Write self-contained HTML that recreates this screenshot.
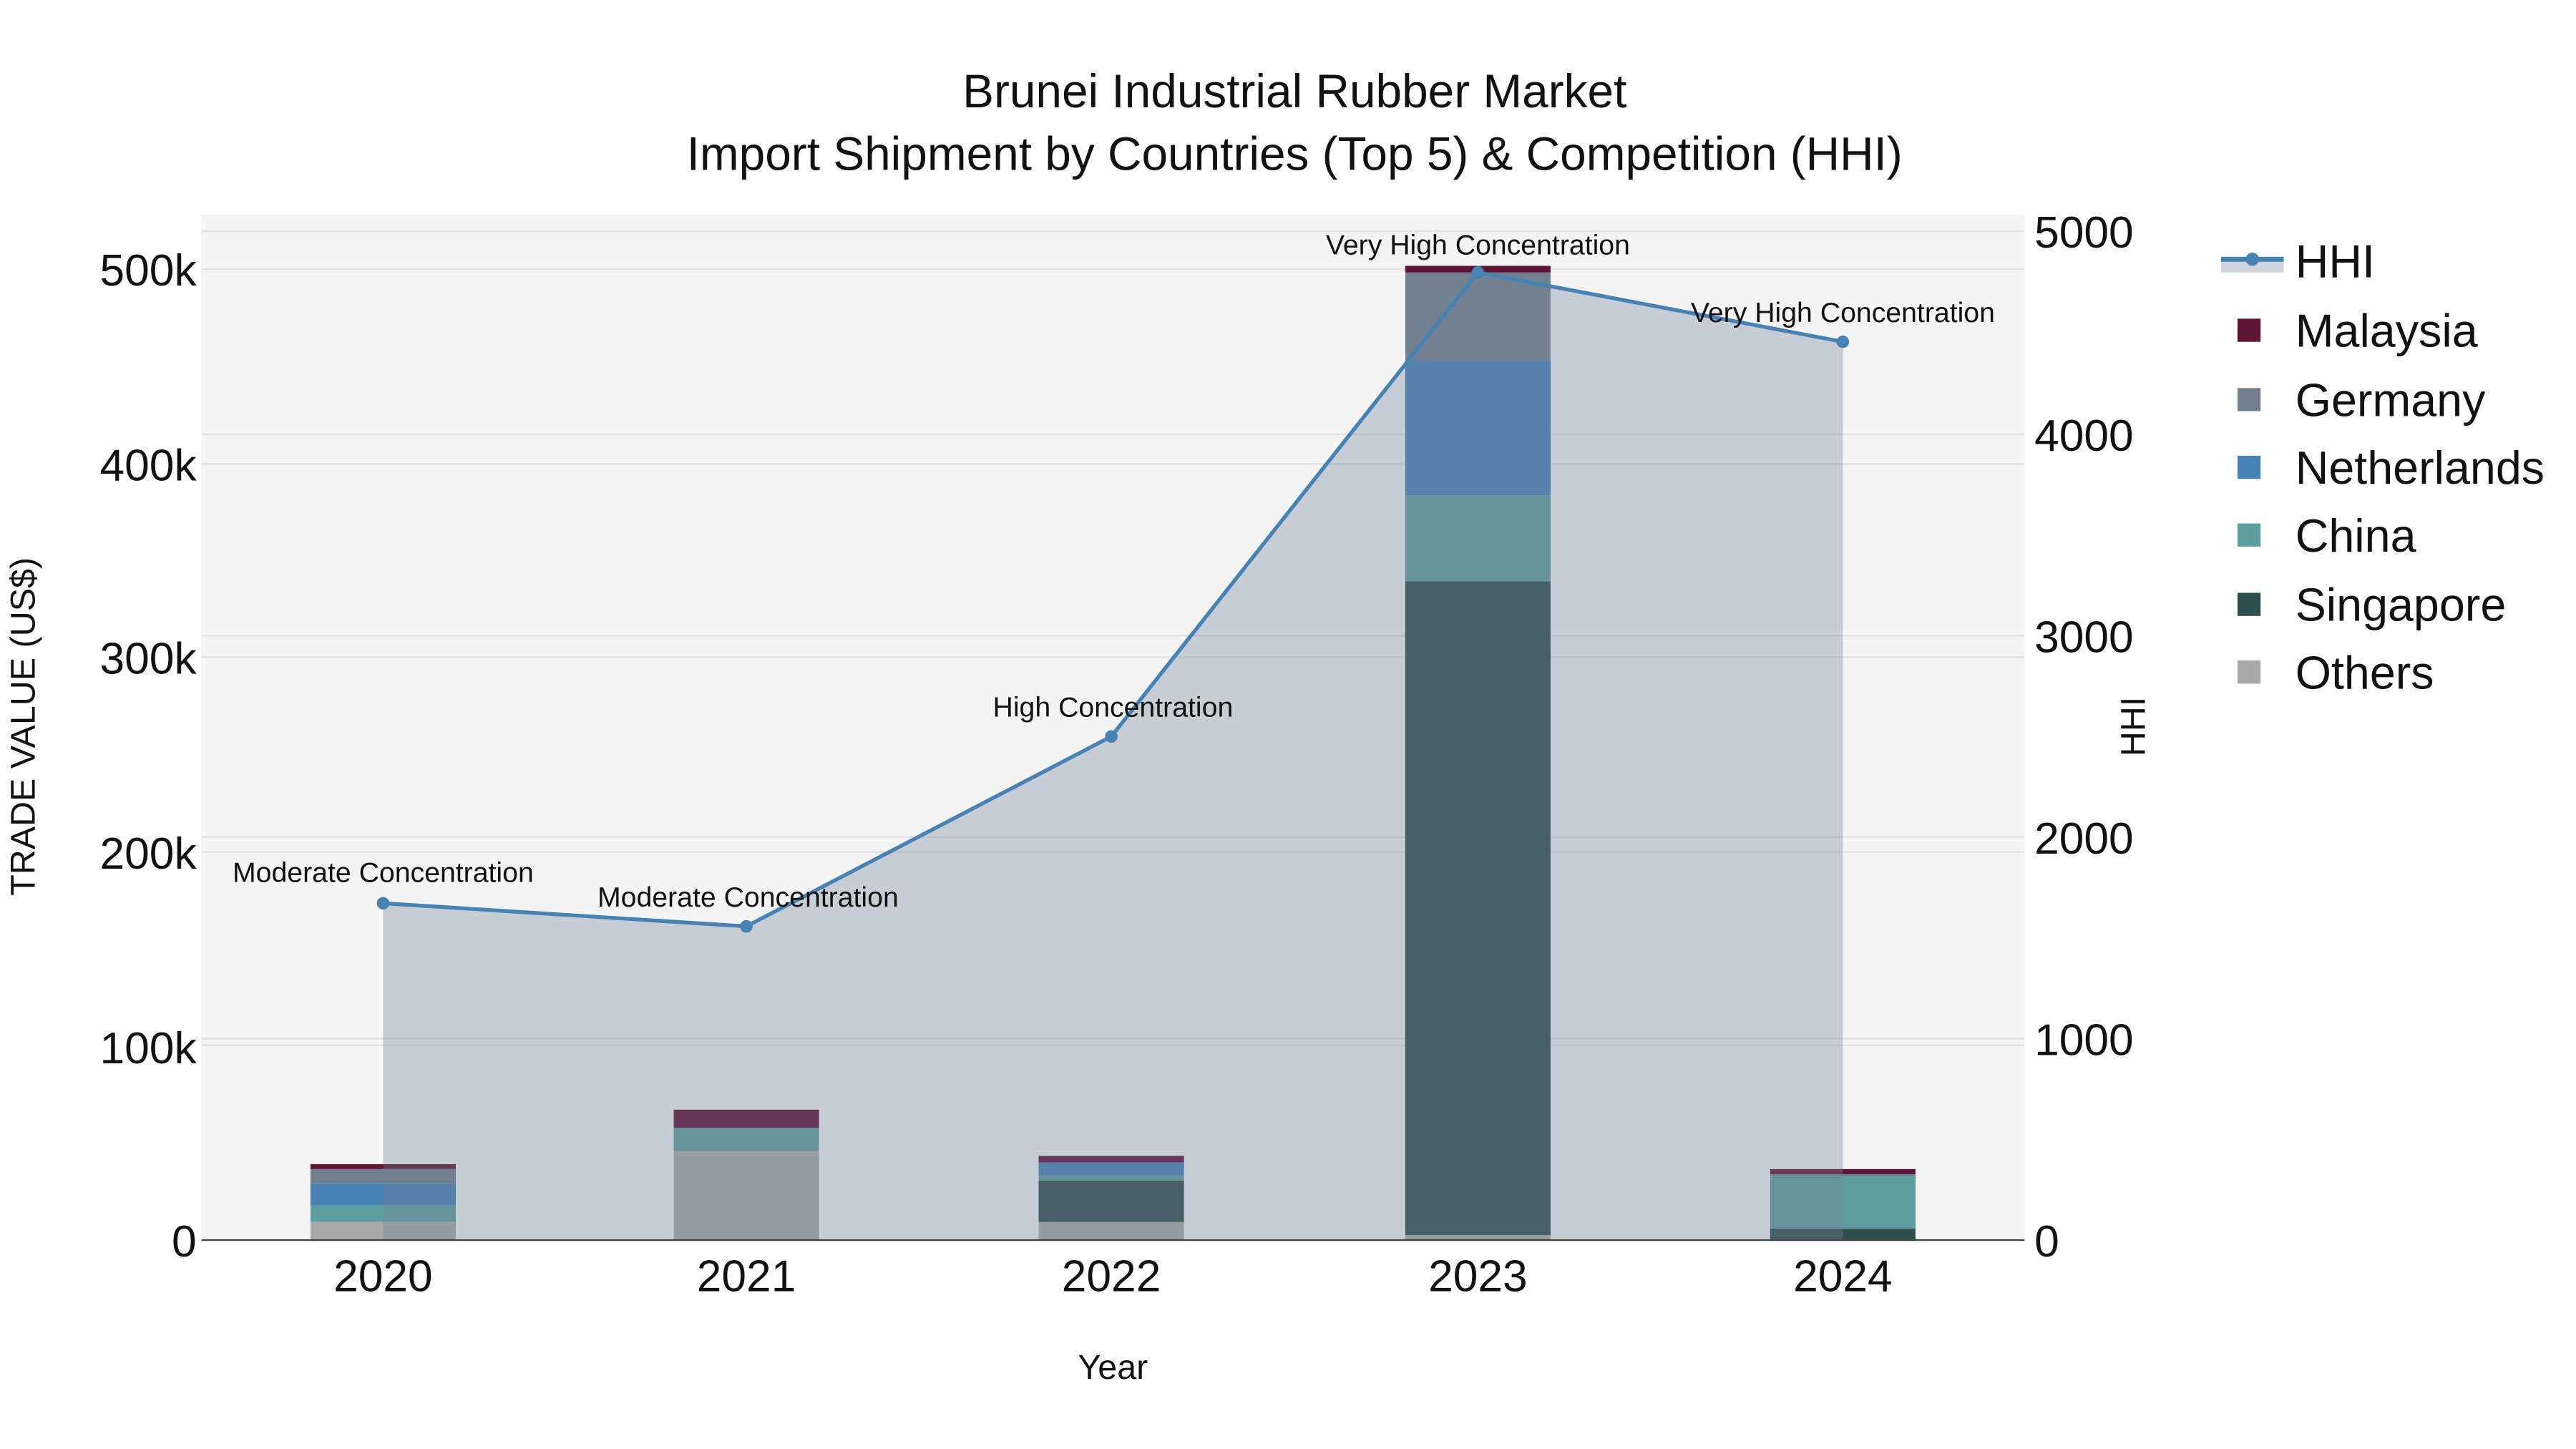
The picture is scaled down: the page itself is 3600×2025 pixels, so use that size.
<!DOCTYPE html>
<html><head><meta charset="utf-8"><style>html,body{margin:0;padding:0;background:#fff}svg{display:block}text{font-family:"Liberation Sans",sans-serif;fill:#111}</style></head><body>
<svg width="3600" height="2025" viewBox="0 0 1560 877.5" xmlns="http://www.w3.org/2000/svg">
<rect width="1560" height="877.5" fill="#fff"/>
<rect x="122" y="130" width="1104" height="621" fill="#f4f4f4"/>
<g stroke="#e2e2e2" stroke-width="1">
<line x1="122" x2="1226" y1="163" y2="163"/><line x1="122" x2="1226" y1="281" y2="281"/><line x1="122" x2="1226" y1="398" y2="398"/><line x1="122" x2="1226" y1="516" y2="516"/><line x1="122" x2="1226" y1="633" y2="633"/>
<line x1="122" x2="1226" y1="140" y2="140"/><line x1="122" x2="1226" y1="263" y2="263"/><line x1="122" x2="1226" y1="385" y2="385"/><line x1="122" x2="1226" y1="507" y2="507"/><line x1="122" x2="1226" y1="629" y2="629"/>
</g>
<g>
<rect x="188" y="740" width="88" height="11" fill="#a9a9a9"/><rect x="188" y="730" width="88" height="10" fill="#5f9ea0"/><rect x="188" y="717" width="88" height="13" fill="#4682b4"/><rect x="188" y="708" width="88" height="9" fill="#708090"/><rect x="188" y="705" width="88" height="3" fill="#5e1434"/>
<rect x="408" y="697" width="88" height="54" fill="#a9a9a9"/><rect x="408" y="683" width="88" height="14" fill="#5f9ea0"/><rect x="408" y="672" width="88" height="11" fill="#5e1434"/>
<rect x="629" y="740" width="88" height="11" fill="#a9a9a9"/><rect x="629" y="715" width="88" height="25" fill="#2f4f4f"/><rect x="629" y="712" width="88" height="3" fill="#5f9ea0"/><rect x="629" y="704" width="88" height="8" fill="#4682b4"/><rect x="629" y="700" width="88" height="4" fill="#5e1434"/>
<rect x="851" y="748" width="88" height="3" fill="#a9a9a9"/><rect x="851" y="352" width="88" height="396" fill="#2f4f4f"/><rect x="851" y="300" width="88" height="52" fill="#5f9ea0"/><rect x="851" y="218" width="88" height="82" fill="#4682b4"/><rect x="851" y="165" width="88" height="53" fill="#708090"/><rect x="851" y="161" width="88" height="4" fill="#5e1434"/>
<rect x="1072" y="744" width="88" height="7" fill="#2f4f4f"/><rect x="1072" y="712" width="88" height="32" fill="#5f9ea0"/><rect x="1072" y="710" width="88" height="2" fill="#708090"/><rect x="1072" y="708" width="88" height="3" fill="#5e1434"/>
</g>
<polygon points="232,751 232,547 452,561 673,446 895,165 1116,207 1116,751" fill="#768299" fill-opacity="0.35"/>
<line x1="122" x2="1226" y1="751" y2="751" stroke="#444" stroke-width="1"/>
<polyline points="232,547 452,561 673,446 895,165 1116,207" fill="none" stroke="#4682b4" stroke-width="2.3"/>
<g fill="#4682b4"><circle cx="232" cy="547" r="3.8"/><circle cx="452" cy="561" r="3.8"/><circle cx="673" cy="446" r="3.8"/><circle cx="895" cy="165" r="3.8"/><circle cx="1116" cy="207" r="3.8"/></g>
<g font-size="17" text-anchor="middle">
<text x="232" y="534">Moderate Concentration</text><text x="453" y="549">Moderate Concentration</text><text x="674" y="434">High Concentration</text><text x="895" y="154">Very High Concentration</text><text x="1116" y="195">Very High Concentration</text>
</g>
<g font-size="28.5" text-anchor="middle"><text x="784" y="65">Brunei Industrial Rubber Market</text><text x="784" y="103">Import Shipment by Countries (Top 5) &amp; Competition (HHI)</text></g>
<g font-size="27" text-anchor="end"><text x="119" y="761">0</text><text x="119" y="644">100k</text><text x="119" y="526">200k</text><text x="119" y="408">300k</text><text x="119" y="291">400k</text><text x="119" y="173">500k</text></g>
<g font-size="27"><text x="1232" y="761">0</text><text x="1232" y="639">1000</text><text x="1232" y="517">2000</text><text x="1232" y="395">3000</text><text x="1232" y="273">4000</text><text x="1232" y="150">5000</text></g>
<g font-size="27" text-anchor="middle"><text x="232" y="782">2020</text><text x="452" y="782">2021</text><text x="673" y="782">2022</text><text x="895" y="782">2023</text><text x="1116" y="782">2024</text></g>
<text x="674" y="835" font-size="21" text-anchor="middle">Year</text>
<text transform="translate(21,440) rotate(-90)" font-size="21" text-anchor="middle">TRADE VALUE (US$)</text>
<text transform="translate(1299,440) rotate(-90)" font-size="21" text-anchor="middle">HHI</text>
<rect x="1345" y="158" width="38" height="7" fill="#d0d5dd"/><line x1="1345" x2="1383" y1="157" y2="157" stroke="#4682b4" stroke-width="3"/><circle cx="1364" cy="157" r="4" fill="#4682b4"/>
<rect x="1355" y="193" width="14" height="14" fill="#5e1434"/><rect x="1355" y="235" width="14" height="14" fill="#708090"/><rect x="1355" y="276" width="14" height="14" fill="#4682b4"/><rect x="1355" y="317" width="14" height="14" fill="#5f9ea0"/><rect x="1355" y="359" width="14" height="14" fill="#2f4f4f"/><rect x="1355" y="400" width="14" height="14" fill="#a9a9a9"/>
<g font-size="28"><text x="1390" y="168">HHI</text><text x="1390" y="210">Malaysia</text><text x="1390" y="252">Germany</text><text x="1390" y="293">Netherlands</text><text x="1390" y="334">China</text><text x="1390" y="376">Singapore</text><text x="1390" y="417">Others</text></g>
</svg>
</body></html>
